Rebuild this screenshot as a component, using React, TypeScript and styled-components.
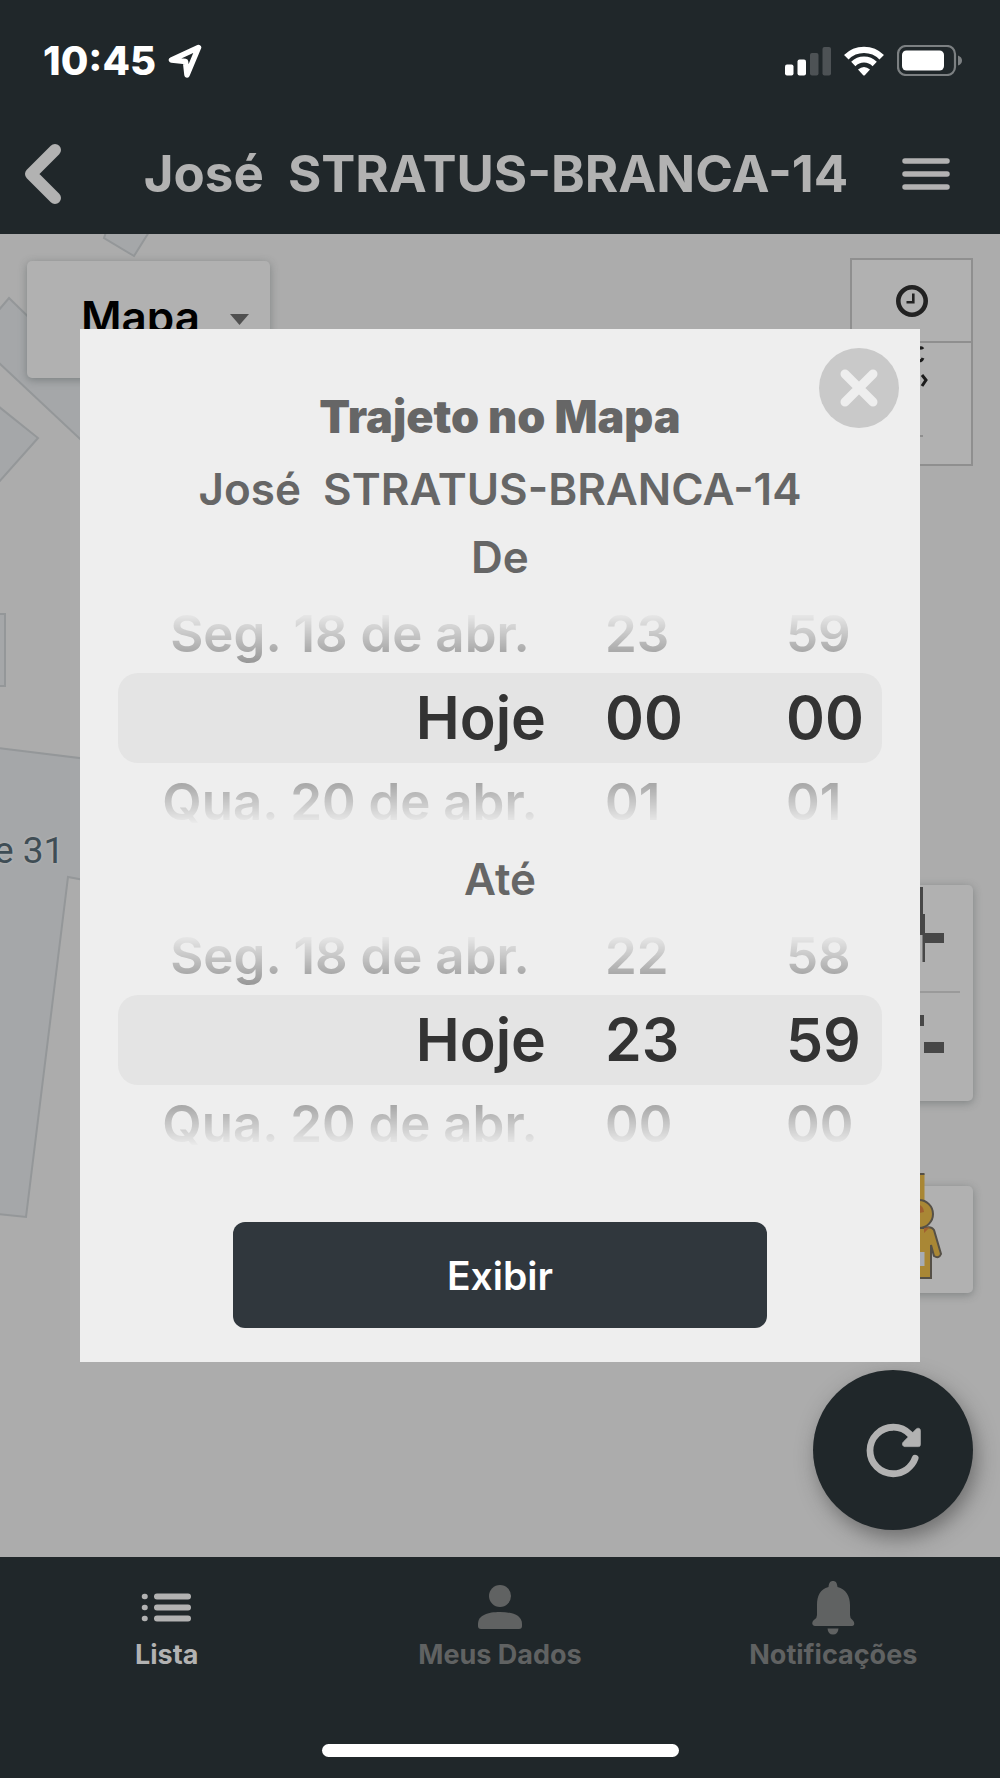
import React from "react";
import styled, { createGlobalStyle } from "styled-components";

const color = {
  bar: "#20272a",
  barText: "#b2b2b2",
  barMuted: "#606262",
  map: "#acacac",
  control: "#b1b1b1",
  building: "#a5a7a9",
  buildingLine: "#949799",
  sheet: "#eeeeee",
  sheetText: "#666666",
  band: "#e4e4e4",
  picked: "#333333",
  button: "#30373d",
};

const GlobalStyle = createGlobalStyle`
  *, *::before, *::after { box-sizing: border-box; }
  body {
    margin: 0;
    background: ${color.map};
    font-family: Inter, "Liberation Sans", sans-serif;
  }
  button, select { font: inherit; }
  h1, h2, p, ul { margin: 0; padding: 0; }
`;

const Screen = styled.div`
  position: relative;
  display: flex;
  flex-direction: column;
  min-height: 100vh;
`;

const TopBar = styled.header`
  background: ${color.bar};
`;

const StatusBar = styled.div`
  display: flex;
  justify-content: space-between;
  align-items: center;
  height: 121px;
  padding: 0 37px 0 43px;
  color: #ffffff;
`;

const Clock = styled.div`
  display: flex;
  align-items: center;
  gap: 12px;
  font-size: 40px;
  line-height: 46px;
  font-weight: 800;
`;

const StatusIcons = styled.div`
  display: flex;
  align-items: center;
  gap: 13px;
`;

const TitleBar = styled.div`
  display: flex;
  align-items: center;
  justify-content: space-between;
  height: 113px;
  padding: 0 50px 8px 24px;
`;

const BarTitle = styled.h1`
  flex: 1;
  padding-left: 28px;
  text-align: center;
  font-size: 51px;
  line-height: 60px;
  font-weight: 700;
  color: ${color.barText};
  white-space: pre;
`;

const IconButton = styled.button`
  display: flex;
  align-items: center;
  justify-content: center;
  padding: 0;
  border: 0;
  background: transparent;
  color: ${color.barText};
`;

const MapArea = styled.main`
  position: relative;
  flex: 1;
  display: flex;
  align-items: stretch;
  justify-content: space-between;
  padding: 24px 27px 27px;
  background: ${color.map};
  overflow: hidden;
`;

const Buildings = styled.svg`
  position: absolute;
  top: 0;
  left: 0;
`;

const PlaceLabel = styled.span`
  position: absolute;
  top: 595px;
  left: -6px;
  font-family: Roboto, sans-serif;
  font-size: 37px;
  line-height: 44px;
  color: #3f4d55;
  text-shadow: 0 0 3px #b4b4b4, 0 0 3px #b4b4b4;
`;

const MapTypeBox = styled.label`
  position: relative;
  display: flex;
  align-items: center;
  width: 243px;
  height: 117px;
  margin-top: 3px;
  border-radius: 5px;
  background: ${color.control};
  box-shadow: 0 2px 9px rgba(60, 70, 70, 0.4);
`;

const MapTypeSelect = styled.select`
  appearance: none;
  width: 100%;
  height: 100%;
  padding: 0 0 6px 54px;
  border: 0;
  background: transparent;
  color: #000000;
  font-size: 44px;
  font-weight: 600;
`;

const Caret = styled.svg`
  position: absolute;
  right: 21px;
  top: 53px;
`;

const Controls = styled.div`
  position: relative;
  display: flex;
  flex-direction: column;
  align-items: flex-end;
`;

const HistoryBox = styled.div`
  width: 123px;
  border: 2px solid #8f8f8f;
  background: ${color.control};
`;

const HistoryCell = styled.button<{ $height: number; $divided?: boolean }>`
  display: flex;
  align-items: center;
  justify-content: center;
  width: 100%;
  height: ${(p) => p.$height}px;
  padding: 0;
  border: 0;
  border-bottom: ${(p) => (p.$divided ? "2px solid #8f8f8f" : "0")};
  background: transparent;
`;

const ControlBox = styled.div<{ $top: string }>`
  width: 108px;
  margin-top: ${(p) => p.$top};
  border-radius: 5px;
  background: ${color.control};
  box-shadow: 0 2px 9px rgba(60, 70, 70, 0.4);
`;

const ControlButton = styled.button<{ $height: number }>`
  display: block;
  width: 100%;
  height: ${(p) => p.$height}px;
  padding: 0;
  border: 0;
  background: transparent;

  svg { display: block; }
`;

const ZoomRule = styled.div`
  height: 2px;
  margin: 0 13px;
  background: #9a9a9a;
`;

const RefreshButton = styled.button`
  display: flex;
  align-items: center;
  justify-content: center;
  width: 160px;
  height: 160px;
  margin-top: 77px;
  padding: 0;
  border: 0;
  border-radius: 50%;
  background: ${color.bar};
  color: ${color.barText};
  box-shadow: 4px 8px 20px rgba(50, 50, 50, 0.5);
`;

const TabBar = styled.nav`
  height: 221px;
  display: flex;
  flex-direction: column;
  justify-content: space-between;
  align-items: center;
  padding: 22px 0 21px;
  background: ${color.bar};
`;

const Tabs = styled.div`
  display: grid;
  grid-template-columns: repeat(3, 1fr);
  width: 100%;
`;

const Tab = styled.a<{ $active?: boolean }>`
  display: flex;
  flex-direction: column;
  align-items: center;
  color: ${(p) => (p.$active ? color.barText : color.barMuted)};
  font-size: 27px;
  line-height: 32px;
  font-weight: 700;
  text-decoration: none;

  svg { display: block; margin-bottom: 4px; }
`;

const HomeIndicator = styled.div`
  width: 357px;
  height: 13px;
  border-radius: 7px;
  background: #ffffff;
`;

const Overlay = styled.div`
  position: absolute;
  top: 0;
  left: 0;
  width: 100%;
  padding: 329px 8% 0;
`;

const Sheet = styled.section`
  position: relative;
  display: flex;
  flex-direction: column;
  align-items: center;
  padding: 52px 38px 34px;
  background: ${color.sheet};
  color: ${color.sheetText};
`;

const CloseButton = styled.button`
  position: absolute;
  top: 19px;
  right: 21px;
  width: 80px;
  height: 80px;
  padding: 0;
  border: 0;
  border-radius: 50%;
  background: #c9c9c9;

  svg { display: block; }
`;

const SheetTitle = styled.h2`
  font-size: 45px;
  line-height: 72px;
  font-weight: 900;
`;

const SheetText = styled.p`
  font-size: 44px;
  line-height: 64px;
  font-weight: 600;
  white-space: pre;
`;

const SheetSubtitle = styled(SheetText)`
  line-height: 72px;
`;

const Wheel = styled.ul`
  width: 100%;
  margin: 11px 0;
  list-style: none;
`;

const WheelRow = styled.li<{ $place: "above" | "picked" | "below" }>`
  display: grid;
  grid-template-columns: 428fr 240fr 96fr;
  align-items: center;
  height: ${(p) => (p.$place === "picked" ? 90 : 73)}px;
  padding: ${(p) => ({ above: "0 0 6px", picked: "0", below: "4px 0 0" })[p.$place]};
  border-radius: 20px;
  background: ${(p) => (p.$place === "picked" ? color.band : "transparent")};
  color: ${(p) => (p.$place === "picked" ? color.picked : "#929292")};
  font-size: ${(p) => (p.$place === "picked" ? 59 : 51)}px;
  line-height: 66px;
  font-weight: 600;
  white-space: nowrap;
  mask-image: ${(p) =>
    p.$place === "picked"
      ? "none"
      : `linear-gradient(${p.$place === "above" ? "to bottom" : "to top"}, transparent 15%, #000 90%)`};

  span:first-child {
    padding-left: 36px;
    text-align: ${(p) => (p.$place === "picked" ? "right" : "center")};
  }
  span:nth-child(2) { padding-left: 59px; }
`;

const ShowButton = styled.button`
  width: 70%;
  height: 106px;
  margin-top: 53px;
  border: 0;
  border-radius: 12px;
  background: ${color.button};
  color: #ffffff;
  font-size: 39px;
  font-weight: 600;
`;

type Row = [string, string, string];

function DateWheel({ label, rows }: { label: string; rows: [Row, Row, Row] }) {
  const places = ["above", "picked", "below"] as const;
  return (
    <Wheel role="listbox" aria-label={label}>
      {rows.map((row, i) => (
        <WheelRow key={i} role="option" aria-selected={i === 1} $place={places[i]}>
          {row.map((cell, j) => (
            <span key={j}>{cell}</span>
          ))}
        </WheelRow>
      ))}
    </Wheel>
  );
}

function StatusGlyphs() {
  return (
    <StatusIcons>
      <svg width="46" height="30" viewBox="0 0 46 30" fill="#fff">
        <rect x="0" y="18.500" width="8.500" height="11" rx="2" />
        <rect x="12.500" y="13.500" width="8.500" height="16" rx="2" />
        <rect x="25" y="7" width="8.500" height="22.500" rx="2" fill="#4d5255" />
        <rect x="37.500" y="1" width="8.500" height="28.500" rx="2" fill="#4d5255" />
      </svg>
      <svg width="40" height="30" viewBox="0 0 40 30" fill="none" stroke="#fff">
        <path d="M2.300 11.200 A25 25 0 0 1 37.700 11.200" strokeWidth="6.400" />
        <path d="M9.300 18 A15.200 15.200 0 0 1 30.700 18" strokeWidth="6" />
        <path d="M14 23.500 Q20 18.500 26 23.500 L21 29 Q20 30 19 29 Z" fill="#fff" stroke="none" />
      </svg>
      <svg width="66" height="31" viewBox="0 0 66 31" fill="none">
        <rect x="1" y="1" width="57" height="29" rx="8" stroke="#7c8082" strokeWidth="2.200" />
        <rect x="5" y="5.500" width="42" height="20" rx="4.500" fill="#fff" />
        <path d="M61 10.500 Q65 12 65 15.500 Q65 19 61 20.500 Z" fill="#7c8082" />
      </svg>
    </StatusIcons>
  );
}

export default function App() {
  return (
    <>
      <GlobalStyle />
      <Screen>
        <TopBar>
          <StatusBar>
            <Clock>
              <span>10:45</span>
              <svg width="34" height="34" viewBox="0 0 34 34" fill="none" stroke="#fff" strokeWidth="5.500" strokeLinejoin="round">
                <path d="M30.500 3.500 L3.500 16 L17.500 17.500 L19 31 Z" />
              </svg>
            </Clock>
            <StatusGlyphs />
          </StatusBar>
          <TitleBar>
            <IconButton aria-label="Voltar">
              <svg width="38" height="62" viewBox="0 0 38 62" fill="none" stroke="currentColor" strokeWidth="12" strokeLinecap="round" strokeLinejoin="round">
                <path d="M31 7 L7 31 L31 55" />
              </svg>
            </IconButton>
            <BarTitle>{"José  STRATUS-BRANCA-14"}</BarTitle>
            <IconButton aria-label="Menu">
              <svg width="48" height="34" viewBox="0 0 48 34" stroke="currentColor" strokeWidth="5.500" strokeLinecap="round">
                <path d="M3 4 H45 M3 17 H45 M3 30 H45" />
              </svg>
            </IconButton>
          </TitleBar>
        </TopBar>

        <MapArea>
          <Buildings width="160" height="1020" fill={color.building} stroke={color.buildingLine} strokeWidth="2">
            <path d="M106 -2 L104 4 L134 22 L149 -2" />
            <path d="M-2 77 L9 64 L95 148 V219 L-2 128 Z" />
            <path d="M-2 172 L38 204 L-2 249 Z" />
            <path d="M-2 380 H5 V452 H-2 Z" />
            <path d="M-2 514 L95 526 V648 L68 643 L26 983 L-2 980 Z" />
          </Buildings>
          <PlaceLabel>e 31</PlaceLabel>

          <MapTypeBox>
            <MapTypeSelect aria-label="Tipo de mapa" defaultValue="Mapa">
              <option>Mapa</option>
            </MapTypeSelect>
            <Caret width="19" height="11" viewBox="0 0 19 11" fill="#505050">
              <path d="M0 0 H19 L9.500 11 Z" />
            </Caret>
          </MapTypeBox>

          <Controls>
            <HistoryBox>
              <HistoryCell aria-label="Histórico" $height={83} $divided>
                <svg width="32" height="32" viewBox="0 0 32 32" fill="none" stroke="#222">
                  <circle cx="16" cy="16" r="13.700" strokeWidth="4.600" />
                  <path d="M17.300 8.500 V17.300 H10.500" strokeWidth="2.600" />
                </svg>
              </HistoryCell>
              <HistoryCell aria-label="Detalhes" $height={121}>
                <svg width="119" height="121" viewBox="0 0 119 121" fill="none" stroke="#1c1c1c" strokeWidth="3">
                  <path d="M66 7 Q69 3 71 6 M66 16 Q69 20 71 15" />
                  <path d="M70 32 L74 37 L70 43" />
                  <path d="M66 93 H71" stroke="#8f8f8f" strokeWidth="2" />
                </svg>
              </HistoryCell>
            </HistoryBox>

            <ControlBox $top="auto">
              <ControlButton aria-label="Aumentar zoom" $height={106}>
                <svg width="108" height="106" viewBox="0 0 108 106" fill="#474747">
                  <path d="M50 2 H58 V29 H60 V48 H79 V58 H60 V77 H57.500 V50 H50 Z" />
                </svg>
              </ControlButton>
              <ZoomRule />
              <ControlButton aria-label="Diminuir zoom" $height={108}>
                <svg width="108" height="108" viewBox="0 0 108 108" fill="#474747">
                  <path d="M50 22 H59 V33 H50 Z M59 49 H79 V60 H59 Z" />
                </svg>
              </ControlButton>
            </ControlBox>

            <ControlBox $top="85px">
              <ControlButton aria-label="Street View" $height={107}>
                <svg width="108" height="107" viewBox="0 0 108 107" overflow="visible" fill="#a98735" stroke="#555047" strokeWidth="2">
                  <path d="M50 -12 H59.500 V20 H50 Z" stroke="none" />
                  <path d="M50 -12 H59.500" />
                  <path d="M50 42 H60 Q66 40 69 44 L76 68 Q74 73 69 70 L66 59 V92 H50 Z" />
                  <circle cx="54" cy="28" r="14" />
                  <path d="M50 16 Q59 20 59 26 L50 28 Z M59 42 L65 41 L59 47 Z" fill="#a06030" stroke="none" />
                  <path d="M50 66 H59.500 V80 H50 Z" fill="#a7acb5" stroke="none" />
                </svg>
              </ControlButton>
            </ControlBox>

            <RefreshButton aria-label="Atualizar">
              <svg width="62" height="62" viewBox="-18 -4 512 512" fill="none" stroke="currentColor">
                <path d="M400 148l-21.120-24.570A191.430 191.430 0 0 0 240 64C134 64 48 150 48 256s86 192 192 192a192.090 192.090 0 0 0 181.070-128" strokeWidth="56" strokeLinecap="round" />
                <path d="M464 90V208a16 16 0 0 1-16 16H337c-20 0-28-24-14-38L430 79C444 66 464 74 464 90z" fill="currentColor" strokeWidth="6" />
              </svg>
            </RefreshButton>
          </Controls>
        </MapArea>

        <TabBar>
          <Tabs>
            <Tab href="#lista" $active>
              <svg width="56" height="56" viewBox="0 0 56 56" stroke="currentColor" strokeWidth="6" strokeLinecap="round">
                <path d="M18 17.500 H49 M18 28.500 H49 M18 39.500 H49" />
                <path d="M5.500 17.500 H6 M5.500 28.500 H6 M5.500 39.500 H6" strokeWidth="5.500" />
              </svg>
              Lista
            </Tab>
            <Tab href="#dados">
              <svg width="56" height="56" viewBox="0 0 56 56" fill="currentColor">
                <circle cx="28" cy="17" r="11" />
                <path d="M6 45 C6 36 16 33 28 33 S50 36 50 45 V47 Q50 50 47 50 H9 Q6 50 6 47 Z" />
              </svg>
              Meus Dados
            </Tab>
            <Tab href="#notificacoes">
              <svg width="56" height="56" viewBox="0 0 56 56" fill="currentColor">
                <path d="M28 2 C31 2 32 4 32.500 8 C41 10 45 17 45 26 V36 Q45 39 47 40.500 C50 43 50 47 47 47 H10 C7 47 6 43 9.500 40.500 Q12 39 12 36 V26 C12 17 15 10 23.500 8 C24 4 25 2 28 2 Z" />
                <path d="M22.500 49.500 H33.500 Q33 55.500 28 55.500 T22.500 49.500 Z" />
              </svg>
              Notificações
            </Tab>
          </Tabs>
          <HomeIndicator />
        </TabBar>

        <Overlay>
          <Sheet role="dialog" aria-labelledby="sheet-title">
            <CloseButton aria-label="Fechar">
              <svg width="80" height="80" viewBox="0 0 80 80" stroke="#eeeeee" strokeWidth="9" strokeLinecap="round">
                <path d="M26 26 L54 54 M54 26 L26 54" />
              </svg>
            </CloseButton>
            <SheetTitle id="sheet-title">Trajeto no Mapa</SheetTitle>
            <SheetSubtitle>{"José  STRATUS-BRANCA-14"}</SheetSubtitle>
            <SheetText>De</SheetText>
            <DateWheel
              label="De"
              rows={[
                ["Seg. 18 de abr.", "23", "59"],
                ["Hoje", "00", "00"],
                ["Qua. 20 de abr.", "01", "01"],
              ]}
            />
            <SheetText>Até</SheetText>
            <DateWheel
              label="Até"
              rows={[
                ["Seg. 18 de abr.", "22", "58"],
                ["Hoje", "23", "59"],
                ["Qua. 20 de abr.", "00", "00"],
              ]}
            />
            <ShowButton>Exibir</ShowButton>
          </Sheet>
        </Overlay>
      </Screen>
    </>
  );
}
